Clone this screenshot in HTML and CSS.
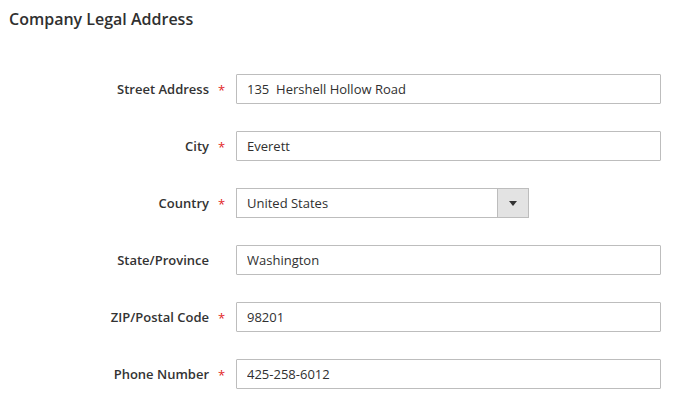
FILE: index.html
```html
<!DOCTYPE html>
<html lang="en">
<head>
    <meta charset="UTF-8">
    <meta name="viewport" content="width=device-width, initial-scale=1.0">
    <title>Company Legal Address</title>
    <link rel="stylesheet" href="styles.css">
</head>
<body>
    <h2 class="section-title">Company Legal Address</h2>
    <div class="form">
        <div class="field">
            <label class="label">Street Address</label>
            <span class="req">*</span>
            <input class="input" type="text" value="135  Hershell Hollow Road">
        </div>
        <div class="field">
            <label class="label">City</label>
            <span class="req">*</span>
            <input class="input" type="text" value="Everett">
        </div>
        <div class="field">
            <label class="label">Country</label>
            <span class="req">*</span>
            <div class="select">
                <span class="select-value">United States</span>
                <span class="select-arrow">
                    <svg width="8" height="5" viewBox="0 0 8 5"><path d="M0 0h8L4 5z" fill="#333"/></svg>
                </span>
            </div>
        </div>
        <div class="field">
            <label class="label">State/Province</label>
            <span class="req"></span>
            <input class="input" type="text" value="Washington">
        </div>
        <div class="field">
            <label class="label">ZIP/Postal Code</label>
            <span class="req">*</span>
            <input class="input" type="text" value="98201">
        </div>
        <div class="field">
            <label class="label">Phone Number</label>
            <span class="req">*</span>
            <input class="input" type="text" value="425-258-6012">
        </div>
    </div>
</body>
</html>
```

FILE: styles.css
```css
body { margin: 0; font-family: "Open Sans", sans-serif; color: #333; background: #fff; }
.section-title { margin: 0; padding: 7px 9px 0; font-size: 16px; font-weight: 600; color: #303030; line-height: 24px; }
.form { display: flex; flex-direction: column; gap: 27px; padding-top: 43px; }
.field { display: grid; grid-template-columns: 209px 27px 425px; align-items: center; }
.label { text-align: right; font-size: 13px; font-weight: 600; color: #333; }
.req { text-align: center; color: #e22626; font-size: 13px; padding-top: 2px; padding-right: 2px; }
.input { box-sizing: border-box; height: 30px; width: 425px; margin: 0; padding: 0 10px; border: 1px solid #bdbdbd; border-radius: 1px; font-family: "Open Sans", sans-serif; font-size: 13px; color: #303030; background: #fff; }
.select { box-sizing: border-box; display: flex; height: 30px; width: 293px; border: 1px solid #bdbdbd; background: #fff; }
.select-value { flex: 1; padding: 0 10px; font-size: 13px; line-height: 28px; color: #303030; }
.select-arrow { width: 30px; display: flex; align-items: center; justify-content: center; background: #e3e3e3; border-left: 1px solid #bdbdbd; }
```
